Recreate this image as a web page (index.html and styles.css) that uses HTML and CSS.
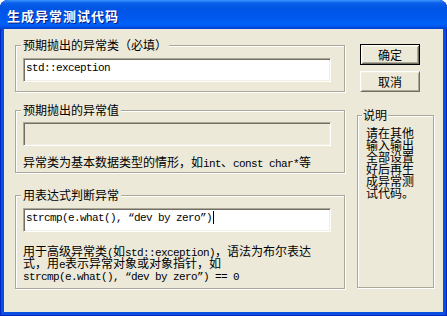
FILE: index.html
```html
<!DOCTYPE html>
<html lang="zh-CN">
<head>
  <meta charset="UTF-8" />
  <meta name="viewport" content="width=device-width, initial-scale=1.0" />
  <title>生成异常测试代码</title>
  <link rel="stylesheet" href="styles.css">
</head>
<body>
  <div class="window">
    <div class="title-bar">生成异常测试代码</div>
    <div class="client">
      <div class="left-col">
        <fieldset class="group group-type">
          <legend>预期抛出的异常类（必填）</legend>
          <div class="edit">std::exception</div>
        </fieldset>

        <fieldset class="group group-value">
          <legend>预期抛出的异常值</legend>
          <div class="edit disabled"></div>
          <p class="hint">异常类为基本数据类型的情形，如<span class="en">int</span>、<span class="en">const char*</span>等</p>
        </fieldset>

        <fieldset class="group group-expr">
          <legend>用表达式判断异常</legend>
          <div class="edit">strcmp(e.what(), “dev by zero”)<span class="caret"></span></div>
          <p class="hint">用于高级异常类<span class="en">(</span>如<span class="en">std::exception)</span>，语法为布尔表达<br>式，用<span class="en">e</span>表示异常对象或对象指针，如<br><span class="en">strcmp(e.what(), “dev by zero”) == 0</span></p>
        </fieldset>
      </div>

      <div class="right-col">
        <button class="btn btn-default">确定</button>
        <button class="btn">取消</button>
        <fieldset class="group group-note">
          <legend>说明</legend>
          <p class="note">请在其他输入输出全部设置好后再生成异常测试代码。</p>
        </fieldset>
      </div>
    </div>
  </div>
</body>
</html>
```

FILE: styles.css
```css
body {
  margin: 0;
  background-color: #fff;
  font-family: 'Noto Sans CJK SC', sans-serif;
  font-size: 12px;
  color: #000;
}
.window {
  width: 447px;
  height: 316px;
  box-sizing: border-box;
  display: flex;
  flex-direction: column;
  background-color: #0a4fe0;
  border-radius: 8px 8px 0 0;
  box-shadow: inset 0 0 0 1px #0029c4;
  overflow: hidden;
}
.title-bar {
  height: 29px;
  flex-shrink: 0;
  display: flex;
  align-items: center;
  padding: 1px 0 0 7px;
  box-sizing: border-box;
  background: linear-gradient(to bottom, #3d95ff 0px, #0a5fea 3px, #0055e5 8px, #0058ee 18px, #0062f7 24px, #0059f0 26px, #0046d8 28px, #0041cc 29px);
  color: #fff;
  font-size: 13px;
  font-weight: bold;
  letter-spacing: 1px;
  text-shadow: 1px 1px 0 #0a1883;
}
.client {
  flex: 1;
  margin: 0 4px 4px;
  background-color: #ece9d8;
  display: flex;
  align-items: flex-start;
  padding: 10px 0 0 11px;
}
.left-col {
  width: 330px;
}
.right-col {
  width: 77px;
  margin: 5px 0 0 12px;
  display: flex;
  flex-direction: column;
}

/* etched group boxes */
.group {
  margin: 0;
  padding: 7px 13px 9px 7px;
  border: 1px solid #aca899;
  box-shadow: inset 1px 1px 0 #fff, 1px 1px 0 #fff;
  min-width: 0;
}
.group legend {
  padding: 0 2px;
  margin-left: -2px;
  line-height: 12px;
  background-color: #ece9d8;
}
.group-value {
  margin-top: 12px;
  padding: 6px 13px 4px 7px;
}
.group-expr {
  margin-top: 16px;
  padding-bottom: 7px;
}
.group-note {
  margin-top: 17px;
  height: 179px;
  box-sizing: border-box;
  padding: 6px 7px 0 8px;
}
.group-note legend {
  margin-left: -4px;
  padding: 0 1px;
}

/* sunken edit fields */
.edit {
  height: 24px;
  box-sizing: border-box;
  border: 1px solid;
  border-color: #aca899 #fff #fff #aca899;
  box-shadow: inset 1px 1px 0 #716f64, inset -1px -1px 0 #f1efe2;
  background-color: #fff;
  padding: 2px 2px;
  font-family: 'Liberation Mono', monospace;
  font-size: 11px;
  line-height: 14px;
  letter-spacing: -0.6px;
  white-space: pre;
}
.edit.disabled {
  background-color: #ece9d8;
}
.caret {
  display: inline-block;
  width: 1px;
  height: 13px;
  margin-left: 1px;
  background-color: #000;
  vertical-align: -3px;
}

.hint {
  margin: 10px 0 0;
  line-height: 12px;
  white-space: nowrap;
}
.group-expr .hint {
  margin-top: 13px;
}
.en {
  font-family: 'Liberation Mono', monospace;
  font-size: 11px;
  letter-spacing: -0.6px;
  line-height: 0;
}
.note {
  margin: 0;
  width: 49px;
  line-height: 12px;
}

/* classic buttons */
.btn {
  width: 60px;
  height: 21px;
  margin: 0 0 0 3px;
  padding: 0;
  font-family: 'Noto Sans CJK SC', sans-serif;
  font-size: 12px;
  color: #000;
  background-color: #ece9d8;
  border: 1px solid;
  border-color: #fff #716f64 #716f64 #fff;
  box-shadow: inset 1px 1px 0 #f1efe2, inset -1px -1px 0 #aca899;
}
.btn + .btn {
  margin-top: 6px;
}
.btn-default {
  border-color: #000;
  box-shadow: inset 1px 1px 0 #fff, inset -1px -1px 0 #716f64, inset 2px 2px 0 #f1efe2, inset -2px -2px 0 #aca899;
}
```
